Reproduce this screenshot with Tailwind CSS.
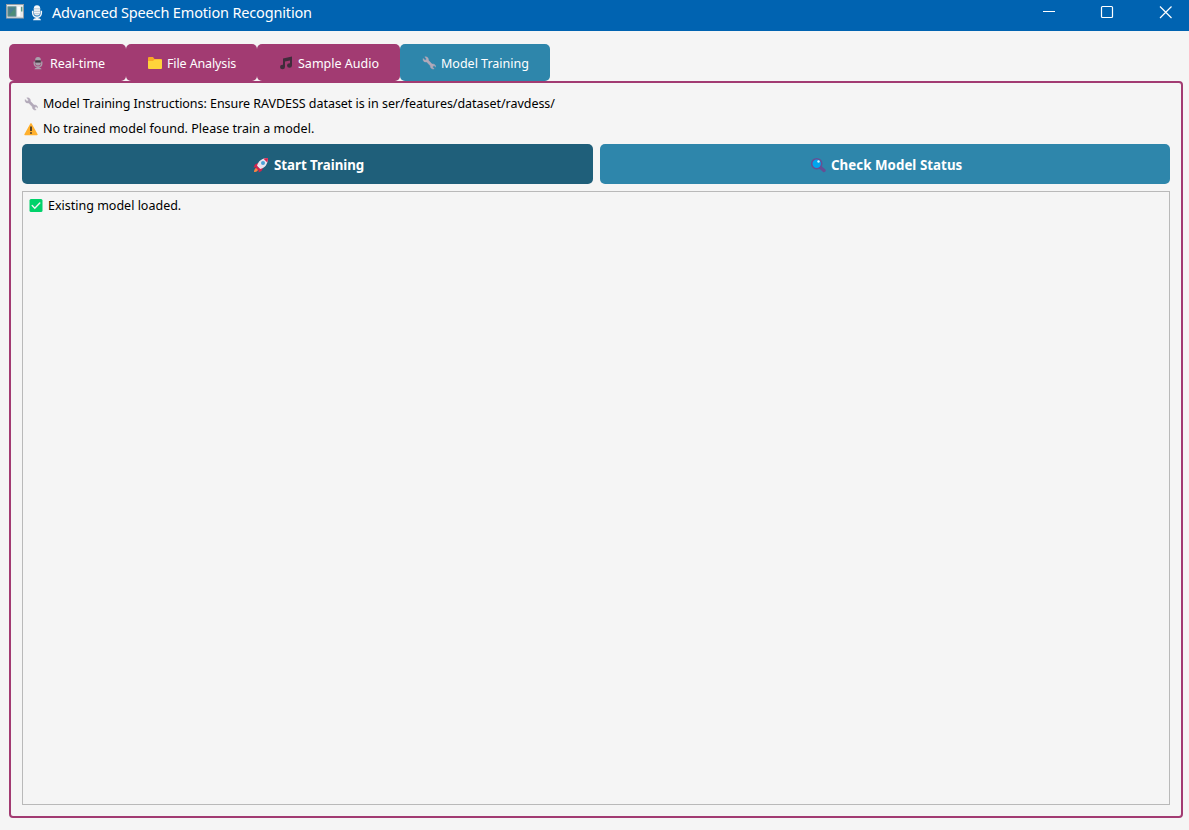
<!DOCTYPE html>
<html lang="en">
<head>
<meta charset="utf-8">
<title>Advanced Speech Emotion Recognition</title>
<script src="https://cdn.jsdelivr.net/npm/@tailwindcss/browser@4"></script>
</head>
<body class="w-[1189px] h-[830px] overflow-hidden bg-[#f5f5f5] flex flex-col font-['Segoe_UI','Noto_Sans',sans-serif] text-[12.5px] text-black whitespace-nowrap">
<svg class="hidden">
  <symbol id="wrench" viewBox="0 0 14 14"><path d="M1 2.400 3.200 4.300 4.500 3 2.800.8C4.800.2 6.800 1.700 6.500 4.300L10 8c2-.4 3.800.8 3.700 3.100L12 9.600 10.500 11l1.700 2C10 13.500 8 12 8.300 9.800L4.700 6C2.600 6.500.6 5 1 2.400Z" fill="#b2a9b9" stroke="#b2a9b9" stroke-width=".4"/></symbol>
  <symbol id="mic" viewBox="0 0 14 14"><path d="M3.200 5.500v1.700c0 5 7.600 5 7.600 0V5.500M7 10.500v2" fill="none" stroke="currentColor" stroke-width="1.300"/><rect x="4.200" y="1" width="5.600" height="8.500" rx="2.800" fill="currentColor"/><path d="M3.500 13.300c.3-2.300 6.700-2.300 7 0Z" fill="currentColor"/></symbol>
</svg>
<header class="h-[31px] shrink-0 bg-[#0063b1] text-white flex items-start">
  <svg class="ml-[6px] mt-[4px] w-[18px] h-[15px] shrink-0" viewBox="0 0 19 16" preserveAspectRatio="none"><rect x=".5" y=".5" width="18" height="14.500" fill="#e8eaea" stroke="#989fa5"/><rect x="2" y="3" width="8.500" height="10" fill="#4d8d78" stroke="#638999"/><path d="M3 12V4h7Z" fill="#4777a0" opacity=".65"/><path d="M12 3h3v10h-3z" fill="#fff"/><path d="M15.800 3h1.500v5h-1.500z" fill="#5b9c83"/></svg>
  <svg class="ml-[5px] mt-[4px] w-[16px] h-[17px] shrink-0 text-[#f4f7fa]" viewBox="0 0 14 14" preserveAspectRatio="none"><use href="#mic"/><path d="M4 4h6M4 6h6M4 8h6" stroke="#9dafc3" stroke-width=".6"/></svg>
  <h1 class="ml-[7px] mt-[2px] text-[14.5px] tracking-[-0.16px] leading-[20px] w-[600px]">Advanced Speech Emotion Recognition</h1>
  <svg class="ml-auto mr-[15px] w-[132px] h-[26px] shrink-0" viewBox="1042 0 132 26" fill="none" stroke="#fff" stroke-width="1.200"><path d="M1043 11.500h12" stroke-width="1"/><rect x="1101.500" y="6.500" width="11" height="11" rx="1"/><path d="m1160 6.500 11.500 11.500m0-11.500L1160 18"/></svg>
</header>
<main class="flex flex-col pt-[13px] pl-[9px] pr-[6px] h-[788px]">
  <nav class="flex h-[37px] shrink-0 text-white leading-[18px]">
    <div class="w-[117px] bg-[#a23b72] rounded-[5px] flex items-center pl-[22px] gap-[5px]">
      <svg class="w-[14px] h-[14px] shrink-0 text-[#aaa1ad]" viewBox="0 0 14 14"><use href="#mic"/><path d="M4.200 4.300h5.600v2.300H4.200z" fill="#403840"/></svg><span class="pt-[2px] tracking-[-0.05px]">Real-time</span>
    </div>
    <div class="w-[131px] bg-[#a23b72] rounded-[5px] flex items-center pl-[22px] gap-[5px]">
      <svg class="w-[14px] h-[14px] shrink-0" viewBox="0 0 14 14"><path d="M0 2q0-1 1-1h4l1.500 2H13q1 0 1 1v4H0Z" fill="#f9a825"/><path d="M0 5h5l1.500-1.500H13q1 0 1 1V12q0 1-1 1H1q-1 0-1-1Z" fill="#ffd43b"/></svg><span class="pt-[2px] tracking-[-0.12px]">File Analysis</span>
    </div>
    <div class="w-[143px] bg-[#a23b72] rounded-[5px] flex items-center pl-[22px] gap-[5px]">
      <svg class="w-[14px] h-[14px] shrink-0" viewBox="0 0 14 14" fill="#402c3c"><path d="M4 2.500 13 .5v9h-2V4.500L6 5.600V11H4Z"/><ellipse cx="3.500" cy="11" rx="2.500" ry="2.200"/><ellipse cx="10.500" cy="9.500" rx="2.500" ry="2.200"/></svg><span class="pt-[2px]">Sample Audio</span>
    </div>
    <div class="w-[150px] bg-[#2e86ab] rounded-[5px] flex items-center pl-[22px] gap-[5px]">
      <svg class="w-[14px] h-[14px] shrink-0"><use href="#wrench"/></svg><span class="pt-[2px]">Model Training</span>
    </div>
  </nav>
  <section class="h-[737px] shrink-0 border-2 border-[#a23b72] rounded-[4px] px-[11px] flex flex-col">
    <div class="mt-[11px] ml-[2px] h-[19px] flex items-center gap-[5px]"><svg class="w-[14px] h-[14px] shrink-0"><use href="#wrench"/></svg><span class="pt-[2px] tracking-[-0.04px]">Model Training Instructions: Ensure RAVDESS dataset is in ser/features/dataset/ravdess/</span></div>
    <div class="mt-[6px] ml-[2px] h-[19px] flex items-center gap-[5px]"><svg class="w-[14px] h-[14px] shrink-0" viewBox="0 0 14 14"><path d="M7 1.800 13 12.500H1Z" fill="#ffb02e" stroke="#ffb02e" stroke-width="1.400" stroke-linejoin="round"/><path d="M7 4.500v4.500M7 10.200v1.600" stroke="#3a3027" stroke-width="1.700"/></svg><span class="pt-[2px] tracking-[0.02px]">No trained model found. Please train a model.</span></div>
    <div class="mt-[6px] h-[40px] shrink-0 flex gap-[7px] text-white font-bold text-[13.3px]">
      <button class="w-[571px] rounded-[5px] bg-[#1f5f7a] flex items-center pl-[231px] gap-[5px]"><svg class="w-[16px] h-[16px] shrink-0 mt-[2px]" viewBox="0 0 16 16"><path d="M5 6 2 7.500.5 10.500 5 10Zm5 5-1.500 3-3 1.500L6 11Z" fill="#d5224e"/><path d="M4 9c1-5 5-8 11-8 0 6-3 10-8 11Z" fill="#e9e4ee"/><path d="M10.500 1.700Q12.500 1 15 1q0 2.500-.7 4.500ZM4 9l3 3-2 1.500L2.500 11Z" fill="#d5224e"/><circle cx="10" cy="6" r="2" fill="#4ba2d7"/><path d="m3 11 2 2c-1 2-3 2-4 2 0-2 1-3.500 2-4Z" fill="#ff823f"/></svg><span class="pt-[4px] tracking-[-0.02px]">Start Training</span></button>
      <button class="w-[570px] rounded-[5px] bg-[#2e86ab] flex items-center pl-[210px] gap-[5px]"><svg class="w-[16px] h-[16px] shrink-0 mt-[1px]" viewBox="0 0 16 16"><path d="m10.500 10.500 3.500 3" stroke="#664f94" stroke-width="3.400" stroke-linecap="round"/><circle cx="6.700" cy="6.700" r="5" fill="#00a6ed" stroke="#664f94" stroke-width="1.600"/><circle cx="8.500" cy="4.500" r="1.200" fill="#d8f4ff"/></svg><span class="pt-[4px] tracking-[0.05px]">Check Model Status</span></button>
    </div>
    <div class="mt-[7px] h-[614px] w-[1148px] shrink-0 border border-[#b9b9b9] pl-[6px] pt-[4px]">
      <div class="h-[19px] flex items-center gap-[5px]"><svg class="w-[14px] h-[14px] shrink-0" viewBox="0 0 14 14"><rect x=".5" y="0" width="13" height="13" rx="1.500" fill="#00d26a"/><path d="m3.200 6.500 2.600 2.700 5-5.200" fill="none" stroke="#f4f4f4" stroke-width="1.400" stroke-linecap="round"/></svg><span class="pt-[2px]">Existing model loaded.</span></div>
    </div>
  </section>
</main>
</body>
</html>
